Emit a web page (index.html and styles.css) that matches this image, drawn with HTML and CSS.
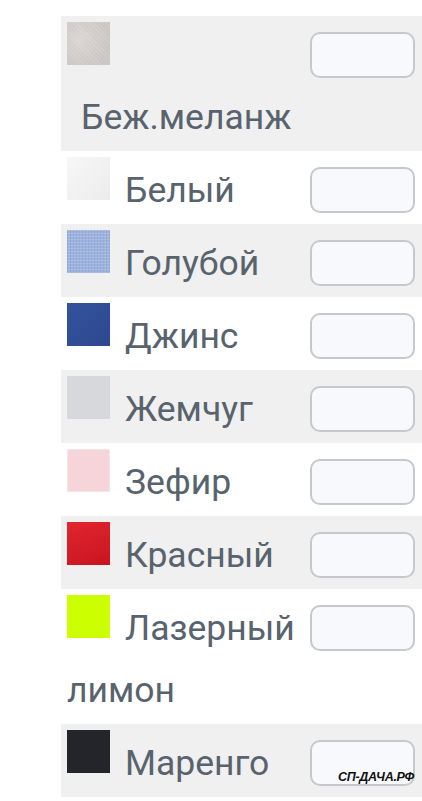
FILE: index.html
```html
<!DOCTYPE html>
<html lang="ru">
<head>
    <meta charset="UTF-8">
    <meta name="viewport" content="width=device-width, initial-scale=1.0">
    <title>Цвета</title>
    <link rel="stylesheet" href="styles.css">
</head>
<body>
  <div class="colors">
    <div class="row odd">
      <span class="qty"></span>
      <span class="swatch beige"></span>
      <span class="name name-block">Беж.меланж</span>
    </div>
    <div class="row">
      <span class="qty"></span>
      <span class="swatch white"></span><span class="name">Белый</span>
    </div>
    <div class="row odd">
      <span class="qty"></span>
      <span class="swatch blue"></span><span class="name">Голубой</span>
    </div>
    <div class="row">
      <span class="qty"></span>
      <span class="swatch denim"></span><span class="name">Джинс</span>
    </div>
    <div class="row odd">
      <span class="qty"></span>
      <span class="swatch pearl"></span><span class="name">Жемчуг</span>
    </div>
    <div class="row">
      <span class="qty"></span>
      <span class="swatch zephyr"></span><span class="name">Зефир</span>
    </div>
    <div class="row odd">
      <span class="qty"></span>
      <span class="swatch red"></span><span class="name">Красный</span>
    </div>
    <div class="row">
      <span class="qty"></span>
      <span class="swatch lime"></span><span class="name">Лазерный</span><br>лимон
    </div>
    <div class="row odd">
      <span class="qty"></span>
      <span class="swatch marengo"></span><span class="name">Маренго</span>
    </div>
  </div>
  <div class="watermark">СП-ДАЧА.РФ</div>
</body>
</html>
```

FILE: styles.css
```css
body {
  margin: 0;
  background: #fff;
  font-family: Roboto, "Noto Sans", sans-serif;
}

.colors {
  margin-left: 61px;
  padding-top: 16px;
}

.row {
  padding: 8px 7px 3px 6px;
  font-size: 35.5px;
  line-height: 62px;
  color: #58636e;
}

.row.odd {
  background: #f0f0f0;
}

.swatch {
  display: inline-block;
  width: 43px;
  height: 43px;
  margin-top: -2px;
  vertical-align: top;
}

.name {
  margin-left: 15px;
}

.name-block {
  display: block;
  margin-left: 0;
  padding-left: 14px;
}

.qty {
  float: right;
  box-sizing: border-box;
  width: 105px;
  height: 46px;
  margin-top: 8px;
  border: 2px solid #c6c8cc;
  border-radius: 10px;
  background: #f8f9fc;
}

.beige {
  background:
    repeating-linear-gradient(45deg, rgba(255,255,255,0.12) 0 1px, transparent 1px 3px),
    radial-gradient(circle at 30% 40%, #dad5d3, #cbc5c3 75%);
}

.white {
  background: linear-gradient(135deg, #f7f7f7, #ececec);
}

.blue {
  background:
    repeating-linear-gradient(0deg, rgba(255,255,255,0.15) 0 1px, transparent 1px 3px),
    repeating-linear-gradient(90deg, rgba(60,90,160,0.12) 0 1px, transparent 1px 3px),
    #9db3dd;
}

.denim {
  background: linear-gradient(135deg, #34529c, #2c4891);
}

.pearl {
  background: #d7d8dc;
}

.zephyr {
  background: #f5d5d9;
  box-shadow: inset 0 0 0 1px #f9e3e6;
}

.red {
  background: linear-gradient(160deg, #e1262f, #c8141f);
}

.lime {
  background: #ccff00;
}

.marengo {
  background: #24252a;
}

.watermark {
  position: absolute;
  left: 338px;
  top: 770px;
  font-family: "Liberation Sans", Arial, sans-serif;
  font-size: 12.5px;
  font-weight: bold;
  font-style: italic;
  color: #111;
  letter-spacing: -0.3px;
}
```
